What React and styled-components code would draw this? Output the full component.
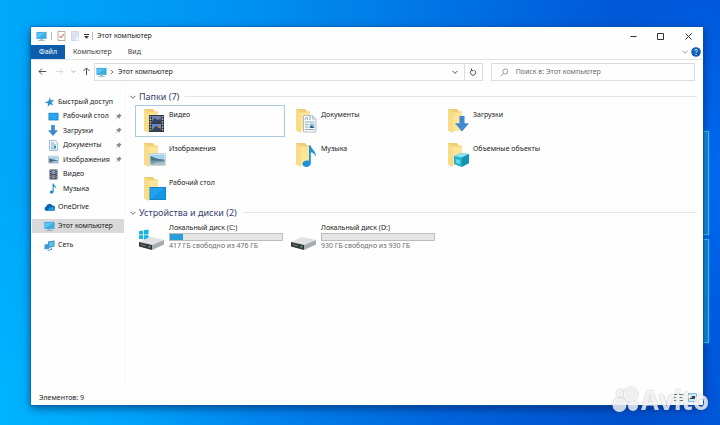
import React from "react";
import styled, { createGlobalStyle } from "styled-components";

const GlobalStyle = createGlobalStyle`
  *, *::before, *::after { box-sizing: border-box; }
  body { margin: 0; }
  body, button, input {
    font-family: "Noto Sans", "Open Sans", sans-serif;
    font-size: 7px;
    line-height: 10px;
    color: #1c1c1c;
  }
  button { padding: 0; border: 0; background: none; text-align: left; }
  ul { margin: 0; padding: 0; list-style: none; }
  svg { display: block; flex: none; }
`;

const Desktop = styled.div`
  position: relative;
  display: flex;
  min-height: 100vh;
  padding: 27px 17px 20px 31px;
  overflow: hidden;
  background:
    radial-gradient(ellipse 130px 330px at 101% 50%, rgba(0, 116, 255, 0.8), rgba(0, 100, 250, 0) 100%),
    linear-gradient(93deg, #00a9fb 0%, #009ff8 14%, #0090f2 34%, #0078e6 56%, #005edb 78%, #004ccb 100%);
`;

const BottomGlow = styled.div`
  position: absolute;
  inset: auto 0 0 0;
  height: 60%;
  background: linear-gradient(90deg, #00b4ff 0%, #00a4fb 18%, #0086ee 35%, #0064dc 62%, #0050cd 88%, #0058da 100%);
  mask-image: linear-gradient(180deg, transparent, #000 90%);
`;

const LightPane = styled.div`
  position: absolute;
  right: 11px;
  top: ${(p) => p.$top}px;
  width: 20px;
  height: 104px;
  border: 1px solid #3cc4f6;
  background: #168bd8;
  box-shadow: 0 0 3px #159cf0;
`;

const Window = styled.main`
  position: relative;
  display: flex;
  flex: 1;
  flex-direction: column;
  min-width: 0;
  background: #fefefe;
  outline: 1px solid rgba(0, 86, 170, 0.5);
  box-shadow: 0 3px 9px rgba(0, 20, 70, 0.6);
`;

const TitleBar = styled.header`
  display: flex;
  align-items: center;
  height: 18px;
  padding: 0 2px 0 5px;
  gap: 4px;
`;

const Divider = styled.span`
  width: 1px;
  height: 8px;
  background: #b5b5b5;
`;

const Title = styled.h1`
  flex: 1;
  margin: 0;
  font-size: 7px;
  font-weight: 400;
`;

const IconButton = styled.button`
  display: flex;
  align-items: center;
  justify-content: center;
  width: ${(p) => p.$w || 10}px;
  height: ${(p) => p.$h || 16}px;
`;

const Ribbon = styled.nav`
  display: flex;
  align-items: center;
  height: 15px;
  padding-right: 1px;
  border-bottom: 1px solid #e3e3e3;
`;

const RibbonTab = styled.button`
  height: 14px;
  padding: 0 8px;
  color: ${(p) => (p.$active ? "#fff" : "#404040")};
  background: ${(p) => (p.$active ? "#0d5dab" : "transparent")};
`;

const Spacer = styled.span`
  flex: 1;
`;

const AddressRow = styled.div`
  display: flex;
  align-items: center;
  gap: 8px;
  padding: 3px 8px 3px 5px;
`;

const History = styled.div`
  display: flex;
  gap: 5px;
  width: 58px;
`;

const AddressGroup = styled.div`
  display: flex;
  flex: 1;
  min-width: 0;
`;

const AddressBox = styled.div`
  display: flex;
  flex: 1;
  align-items: center;
  height: 18px;
  padding-left: 1px;
  gap: 3px;
  border: 1px solid #dcdcdc;
`;

const Crumb = styled.button`
  flex: 1;
  margin-left: 1px;
`;

const RefreshBox = styled.div`
  display: flex;
  border-left: 1px solid #dcdcdc;
`;

const SearchBox = styled.label`
  display: flex;
  align-items: center;
  width: 31%;
  max-width: 205px;
  height: 18px;
  padding-left: 8px;
  gap: 7px;
  border: 1px solid #dcdcdc;
`;

const SearchInput = styled.input`
  flex: 1;
  min-width: 0;
  padding: 0;
  border: 0;
  outline: 0;
  background: transparent;
  &::placeholder { color: #6c6c6c; opacity: 1; }
`;

const Body = styled.div`
  display: flex;
  flex: 1;
`;

const Sidebar = styled.nav`
  width: 95px;
  padding: 11px 1px 0;
  border-right: 1px solid #f8f8f8;
`;

const QuickList = styled.ul`
  display: grid;
  grid-auto-rows: 1fr;
  height: 101px;
  margin-bottom: 4px;
`;

const PlaceList = styled.ul`
  display: grid;
  gap: 5px;
`;

const NavItem = styled.button`
  display: flex;
  align-items: center;
  width: 100%;
  height: 14px;
  padding: 0 2px 0 ${(p) => (p.$nested ? 16 : 12)}px;
  gap: ${(p) => (p.$nested ? 4 : 3)}px;
  white-space: nowrap;
  background: ${(p) => (p.$selected ? "#d9d9d9" : "transparent")};
`;

const NavLabel = styled.span`
  flex: 1;
`;

const Content = styled.section`
  flex: 1;
  padding: 6px 6px 0 4px;
`;

const Group = styled.section`
  margin-bottom: 1px;
`;

const GroupHeader = styled.h2`
  display: flex;
  align-items: center;
  height: 13px;
  margin: 0 0 2px;
  gap: 3px;
  font-size: 9px;
  line-height: 13px;
  font-weight: 400;
  color: #35406e;
  &::after {
    content: "";
    flex: 1;
    height: 1px;
    margin-left: 3px;
    background: #e4e6ea;
  }
`;

const TileGrid = styled.div`
  display: grid;
  grid-template-columns: repeat(auto-fill, 150px);
  gap: 2px;
  padding-left: 5px;
`;

const Tile = styled.button`
  display: flex;
  height: 32px;
  padding: 2px 6px 0;
  gap: 3px;
  border: 1px solid ${(p) => (p.$focused ? "#a9cbe2" : "transparent")};
`;

const TileLabel = styled.span`
  padding-top: 2px;
`;

const DriveTile = styled.button`
  display: flex;
  align-items: flex-end;
  height: 30px;
  padding-left: 4px;
  gap: 4px;
`;

const DriveInfo = styled.span`
  display: grid;
  width: 114px;
`;

const DriveName = styled.span`
  line-height: 11px;
`;

const Meter = styled.span`
  height: 8px;
  border: 1px solid #bcbcbc;
  background: #e5e5e5;
`;

const MeterFill = styled.span`
  display: block;
  height: 100%;
  background: #27a0da;
`;

const DriveSpace = styled.span`
  color: #6b6b6b;
`;

const StatusBar = styled.footer`
  display: flex;
  align-items: center;
  height: 15px;
  padding: 0 6px 0 8px;
  gap: 5px;
`;

const Watermark = styled.div`
  position: absolute;
  right: 11px;
  bottom: 9px;
  display: flex;
  align-items: center;
  gap: 1px;
  color: rgba(255, 255, 255, 0.78);
  font-family: "Open Sans", sans-serif;
  font-size: 26px;
  line-height: 32px;
  font-weight: 700;
  filter: drop-shadow(0 0 1px rgba(70, 80, 100, 0.5));
`;

const Monitor = ({ w = 11 }) => (
  <svg width={w} height={w} viewBox="0 0 12 12">
    <path d="M.5 1h11v7.5H.5z" fill="#2f9fdc" />
    <path d="M1.2 1.7h9.6v6.1H1.2z" fill="#59c4f2" />
    <path d="M1.2 7.8 10.8 1.7v6.1z" fill="#38addf" />
    <path d="M5 8.5h2v1.4H5zM2.5 10h7v1h-7z" fill="#8ba7b8" />
  </svg>
);

const Chevron = ({ color = "#666", w = 6 }) => (
  <svg width={w} height={w} viewBox="0 0 6 6" fill="none" stroke={color}>
    <path d="M.5 1.8 3 4.3l2.5-2.5" />
  </svg>
);

const Arrow = ({ turn = 0, color = "#555" }) => (
  <svg width="9" height="9" viewBox="0 0 9 9" fill="none" stroke={color}>
    <path transform={`rotate(${turn} 4.5 4.5)`} d="M8.2 4.5H1M4 1.5l-3 3 3 3" />
  </svg>
);

const Pin = () => (
  <svg width="7" height="7" viewBox="0 0 8 8">
    <path d="m4.8.5 2.7 2.7-.8.4-1.4 1.5-.1 1.7-1.9-1.9L1 7.2l-.3-.3L3 4.6 1.1 2.8l1.8-.1 1.5-1.4z" fill="#84888d" />
  </svg>
);

const DownArrow = () => <path d="M3.2 0h3.6v5.2H10L5 11 0 5.2h3.2z" fill="#3d8ad0" />;

const navIcons = {
  star: <path d="m5.9.5.8 2.7 3.6-.3-2.7 2.5 1.6 3.1-3-1.2L3.7 10l.2-3.4L.7 5.2l3.5-1z" fill="#2c94d0" />,
  desktop: (
    <>
      <path d="M.5 1.8h10v7.6H.5z" fill="#1685cd" />
      <path d="M1.3 2.6h8.4v6H1.3z" fill="#29a5ee" />
    </>
  ),
  downloads: <DownArrow />,
  documents: (
    <>
      <path d="M1.5.5h6l2 2v8h-8z" fill="#edf5f9" stroke="#8eaebf" strokeWidth=".8" />
      <path d="M3 3h3M3 5h5M3 7h2.5M3 8.7h5" stroke="#6faacb" strokeWidth=".9" />
      <path d="M6 6h2v2H6z" fill="#3f88ae" />
    </>
  ),
  pictures: (
    <>
      <path d="M.5 2.2h10v7H.5z" fill="#e6eef3" stroke="#a9bac5" strokeWidth=".7" />
      <path d="M1.2 3h8.6v2.4H1.2z" fill="#a5d2ee" />
      <path d="m1.2 4.5 3 .8 5.6 1v2.2H1.2z" fill="#456c84" />
      <path d="m4 7.6 5.8-1v1.9H3z" fill="#a7c8dc" />
    </>
  ),
  video: (
    <>
      <path d="M1.5.5h8v10h-8z" fill="#43464e" />
      <path d="M3.5 1.3h4v3.6h-4z" fill="#7d9cc0" />
      <path d="M3.5 5.8h4v3.8h-4z" fill="#83899a" />
      <path d="M2.3 1v9M8.7 1v9" stroke="#d3d3d3" strokeWidth=".7" strokeDasharray="1 1" />
    </>
  ),
  music: <path d="M4.6.4h1c.2 2 2.9 2.5 2.6 5.6-.3-1.5-1.2-2.1-2.5-2.3v4.9c0 2.5-3.9 2.6-3.9.6 0-1.5 1.6-2 2.8-1.5z" fill="#1c8fcc" />,
  cloud: (
    <>
      <path d="M2.4 9A2.4 2.4 0 0 1 2.2 4.400 3.300 3.300 0 0 1 8.300 3.600a2.700 2.700 0 0 1 .5 5.400z" fill="#0a64b4" />
      <path d="M2.600 9 6.300 5.500c2-1.500 4.500-.2 4.600 1.700.1 1-.7 1.800-1.700 1.800z" fill="#2598df" />
    </>
  ),
  network: (
    <>
      <path d="m4 1.600 6.500-1v6L4 8z" fill="#2585c2" />
      <path d="m4.800 2.300 4.900-.8v4.400l-4.900 1z" fill="#64bdea" />
      <path d="m.5 4.600 4.800-.8v5L.5 9.600z" fill="#3e9bd4" />
      <path d="m3.500 10.600 4.500-1.400-.6-1.400" stroke="#688fa8" fill="none" />
    </>
  ),
};

const NavIcon = ({ name }) =>
  name === "monitor" ? (
    <Monitor />
  ) : (
    <svg width={11} height={11} viewBox="0 0 11 11">
      {navIcons[name]}
    </svg>
  );

const overlays = {
  video: (
    <>
      <path d="M7 7h15v17H7z" fill="#363944" />
      <path d="M10 8h9v7h-9z" fill="#5a85cb" />
      <path d="M10 16h9v7h-9z" fill="#6587c4" />
      <path d="m10 13 3-3 2 2 4-1v4h-9zM10 22l4-4 5 3v2h-9z" fill="#34435e" />
      <path d="M14 9h2v2h-2zM16 18h2v2h-2z" fill="#c27a42" />
      <path d="M8.500 8v15M20.500 8v15" stroke="#cfc9b8" strokeWidth="1.400" strokeDasharray="1.300 1.300" />
    </>
  ),
  documents: (
    <>
      <path d="M9.500 7.500h9l3.500 3.500v13H9.500z" fill="#f7fafc" stroke="#9db0bd" strokeWidth=".8" />
      <path d="M18.500 7.500V11H22" fill="#dce7ee" stroke="#9db0bd" strokeWidth=".7" />
      <path d="m11 12 1.500-3 1.500 3M15 9h2M15 11h2M11 14h9.500M11 16.500h3.500M11 19h3.500M11 21.500h9.500" stroke="#7395aa" strokeWidth=".8" fill="none" />
      <path d="M15.500 15.500h5v4.500h-5z" fill="#94c4dd" />
      <path d="m15.500 20 2-2.800L20.500 20z" fill="#315f76" />
    </>
  ),
  downloads: (
    <g transform="translate(9 8) scale(1.400)">
      <DownArrow />
    </g>
  ),
  pictures: (
    <>
      <path d="M7.500 11.500h16v12h-16z" fill="#f4f6f7" stroke="#b9c3ca" strokeWidth=".7" />
      <path d="M8.500 12.500h14v5h-14z" fill="#a3d2f0" />
      <path d="m8.500 14 4 1.800 4 1.200 6 .5v2h-14z" fill="#4b7484" />
      <path d="M8.500 18.500h14v4h-14z" fill="#6d98ad" />
      <path d="m8.500 22.500 5-2 9-1v3z" fill="#a9bec4" />
    </>
  ),
  music: <path d="M15 3.500h1.800c.4 4 5.800 5.600 5 11.500-.6-3.200-2.500-4.300-5-4.800v10.600c0 5.400-8.300 5.300-8.300 1.200 0-3 3.500-4.300 6.500-3.200z" fill="#1b93d6" />,
  objects: (
    <>
      <path d="m8 14 7-3 8 1v9l-7.500 4L8 22z" fill="#27b3cf" />
      <path d="m8 14 7-3 8 1-7 3.500z" fill="#8be3ec" />
      <path d="m16 15.500 7-3.500v9l-7.500 4z" fill="#1393b4" />
      <path d="m10 17 4 1v4l-4-1.200z" fill="#64d4df" />
    </>
  ),
  desktop: (
    <>
      <path d="M7.500 11h16.500v13H7.500z" fill="#1479bd" />
      <path d="M8.300 11.800h14.900v11.400H8.300z" fill="#22a2ee" />
      <path d="m8.300 23.200 14.900-11.400v11.400z" fill="#1496e2" />
    </>
  ),
};

const FolderIcon = ({ name }) => (
  <svg width="24" height="26" viewBox="0 0 24 26">
    <path d="M2 1h9l2 2.500h3v19H2z" fill="#f0cf72" />
    <path d="M6 4.500h10v18H6z" fill="#fce49a" />
    <path d="m2 1 5 3.500V25l-5-2.500z" fill="#f9dc88" />
    {overlays[name]}
  </svg>
);

const DriveIcon = ({ system }) => (
  <svg width="26" height="22" viewBox="0 1 26 22">
    {system && <path d="m0 3.200 4-.7v4H0zm4.800-.9L9.500 1.500v5H4.800zM0 7.300h4v4l-4-.6zm4.800 0h4.700v5l-4.700-.8z" fill="#18b3e2" />}
    <path d="m0 14 11-5 14 3-12 5z" fill="#dfe1e2" />
    <path d="m0 14 13 3v5L0 18.500z" fill="#33373a" />
    <path d="m13 17 12-5v4.500L13 22z" fill="#a6abad" />
    <path d="m2 16 5 1.200v1.300L2 17.200z" fill="#707779" />
    <path d="M9.500 18h1.800v1.500H9.500z" fill="#54c27a" />
  </svg>
);

const quickAccess = [
  { label: "Рабочий стол", icon: "desktop", pinned: true },
  { label: "Загрузки", icon: "downloads", pinned: true },
  { label: "Документы", icon: "documents", pinned: true },
  { label: "Изображения", icon: "pictures", pinned: true },
  { label: "Видео", icon: "video" },
  { label: "Музыка", icon: "music" },
];

const places = [
  { label: "OneDrive", icon: "cloud" },
  { label: "Этот компьютер", icon: "monitor", selected: true },
  { label: "Сеть", icon: "network" },
];

const folders = [
  { label: "Видео", icon: "video", focused: true },
  { label: "Документы", icon: "documents" },
  { label: "Загрузки", icon: "downloads" },
  { label: "Изображения", icon: "pictures" },
  { label: "Музыка", icon: "music" },
  { label: "Объемные объекты", icon: "objects" },
  { label: "Рабочий стол", icon: "desktop" },
];

const drives = [
  { label: "Локальный диск (C:)", space: "417 ГБ свободно из 476 ГБ", used: 12, system: true },
  { label: "Локальный диск (D:)", space: "930 ГБ свободно из 930 ГБ", used: 0 },
];

export default function App() {
  return (
    <Desktop>
      <GlobalStyle />
      <BottomGlow />
      <LightPane $top={131} />
      <LightPane $top={239} />
      <Window>
        <TitleBar>
          <Monitor />
          <Divider />
          <IconButton aria-label="Свойства">
            <svg width="9" height="10" viewBox="0 0 9 10" fill="none">
              <path d="M1 .5h7v9H1z" fill="#fff" stroke="#a79c9c" strokeWidth=".8" />
              <path d="m2.500 4.800 1.500 2 3-4" stroke="#d4523f" />
            </svg>
          </IconButton>
          <IconButton aria-label="Новая папка">
            <svg width="8" height="10" viewBox="0 0 8 10">
              <path d="M.5.500h7v9h-7z" fill="#dce2f4" stroke="#c8d0e6" strokeWidth=".8" />
              <path d="M5 6h2.500v3.500H5z" fill="#f4f5fb" />
            </svg>
          </IconButton>
          <IconButton $w={4} aria-label="Настройка панели">
            <svg width="5" height="5" viewBox="0 0 5 5">
              <path d="M0 0h5v1H0zM0 2h5L2.500 4.700z" fill="#333" />
            </svg>
          </IconButton>
          <Divider />
          <Title>Этот компьютер</Title>
          <IconButton $w={23} aria-label="Свернуть">
            <svg width="7" height="7" viewBox="0 0 7 7" stroke="#333"><path d="M.5 3.500h6" /></svg>
          </IconButton>
          <IconButton $w={23} aria-label="Развернуть">
            <svg width="7" height="7" viewBox="0 0 7 7" stroke="#333" fill="none"><path d="M.5.500h6v6h-6z" /></svg>
          </IconButton>
          <IconButton $w={25} aria-label="Закрыть">
            <svg width="7" height="7" viewBox="0 0 7 7" stroke="#333"><path d="m.5.500 6 6m0-6-6 6" /></svg>
          </IconButton>
        </TitleBar>
        <Ribbon>
          <RibbonTab $active>Файл</RibbonTab>
          <RibbonTab>Компьютер</RibbonTab>
          <RibbonTab>Вид</RibbonTab>
          <Spacer />
          <IconButton $h={12} aria-label="Развернуть ленту"><Chevron color="#999" /></IconButton>
          <IconButton $w={12} $h={12} aria-label="Справка">
            <svg width="10" height="10" viewBox="0 0 10 10" fill="none">
              <circle cx="5" cy="5" r="4.800" fill="#0f60b0" />
              <path d="M3.700 3.800c0-2 2.800-1.900 2.700-.2C6.300 4.700 5 4.600 5 6M5 7v1" stroke="#fff" strokeWidth=".9" />
            </svg>
          </IconButton>
        </Ribbon>
        <AddressRow>
          <AddressGroup>
            <History>
              <IconButton $w={12} aria-label="Назад"><Arrow /></IconButton>
              <IconButton $w={12} aria-label="Вперед"><Arrow turn={180} color="#dedede" /></IconButton>
              <IconButton $w={6} aria-label="Последние места"><Chevron color="#999" w={5} /></IconButton>
              <IconButton $w={10} aria-label="Вверх"><Arrow turn={90} /></IconButton>
            </History>
            <AddressBox>
              <Monitor />
              <svg width="4" height="6" viewBox="0 0 4 6" fill="none" stroke="#777"><path d="m1 1 2 2-2 2" /></svg>
              <Crumb>Этот компьютер</Crumb>
              <IconButton $w={12} aria-label="Предыдущие расположения"><Chevron color="#555" /></IconButton>
              <RefreshBox>
                <IconButton $w={17} aria-label="Обновить">
                  <svg width="8" height="8" viewBox="0 0 8 8" fill="none" stroke="#555">
                    <path d="M5.500 2.300A2.700 2.700 0 1 1 2.500 2.300M2.500.500v2.200h2.200" />
                  </svg>
                </IconButton>
              </RefreshBox>
            </AddressBox>
          </AddressGroup>
          <SearchBox>
            <svg width="9" height="9" viewBox="0 0 9 9" fill="none" stroke="#999">
              <circle cx="5.300" cy="3.500" r="2.500" />
              <path d="M3.500 5.300.8 8.200" />
            </svg>
            <SearchInput type="search" placeholder="Поиск в: Этот компьютер" aria-label="Поиск" />
          </SearchBox>
        </AddressRow>
        <Body>
          <Sidebar>
            <QuickList>
              <li>
                <NavItem><NavIcon name="star" /><NavLabel>Быстрый доступ</NavLabel></NavItem>
              </li>
              {quickAccess.map((item) => (
                <li key={item.label}>
                  <NavItem $nested>
                    <NavIcon name={item.icon} />
                    <NavLabel>{item.label}</NavLabel>
                    {item.pinned && <Pin />}
                  </NavItem>
                </li>
              ))}
            </QuickList>
            <PlaceList>
              {places.map((item) => (
                <li key={item.label}>
                  <NavItem $selected={item.selected}>
                    <NavIcon name={item.icon} />
                    <NavLabel>{item.label}</NavLabel>
                  </NavItem>
                </li>
              ))}
            </PlaceList>
          </Sidebar>
          <Content>
            <Group>
              <GroupHeader><Chevron />Папки (7)</GroupHeader>
              <TileGrid>
                {folders.map((f) => (
                  <Tile key={f.label} $focused={f.focused}>
                    <FolderIcon name={f.icon} />
                    <TileLabel>{f.label}</TileLabel>
                  </Tile>
                ))}
              </TileGrid>
            </Group>
            <Group>
              <GroupHeader><Chevron />Устройства и диски (2)</GroupHeader>
              <TileGrid>
                {drives.map((d) => (
                  <DriveTile key={d.label}>
                    <DriveIcon system={d.system} />
                    <DriveInfo>
                      <DriveName>{d.label}</DriveName>
                      <Meter><MeterFill style={{ width: `${d.used}%` }} /></Meter>
                      <DriveSpace>{d.space}</DriveSpace>
                    </DriveInfo>
                  </DriveTile>
                ))}
              </TileGrid>
            </Group>
          </Content>
        </Body>
        <StatusBar>
          <span>Элементов: 9</span>
          <Spacer />
          <svg width="9" height="9" viewBox="0 0 9 9" stroke="#777"><path d="M0 1.500h3m2 0h4M0 4.500h3m2 0h4M0 7.500h3m2 0h4" /></svg>
          <svg width="9" height="9" viewBox="0 0 9 9"><path d="M.5.500h8v8h-8z" fill="#d5ecf7" stroke="#8ac0d9" /><path d="M2 3h5v3H2z" fill="#345" /></svg>
        </StatusBar>
      </Window>
      <Watermark>
        <svg width="28" height="26" viewBox="0 0 28 26" fill="currentColor">
          <circle cx="7.500" cy="18" r="7" />
          <circle cx="18.500" cy="7.500" r="7" />
          <circle cx="8" cy="6" r="3.500" />
          <circle cx="21" cy="19" r="5" />
        </svg>
        Avito
      </Watermark>
    </Desktop>
  );
}
